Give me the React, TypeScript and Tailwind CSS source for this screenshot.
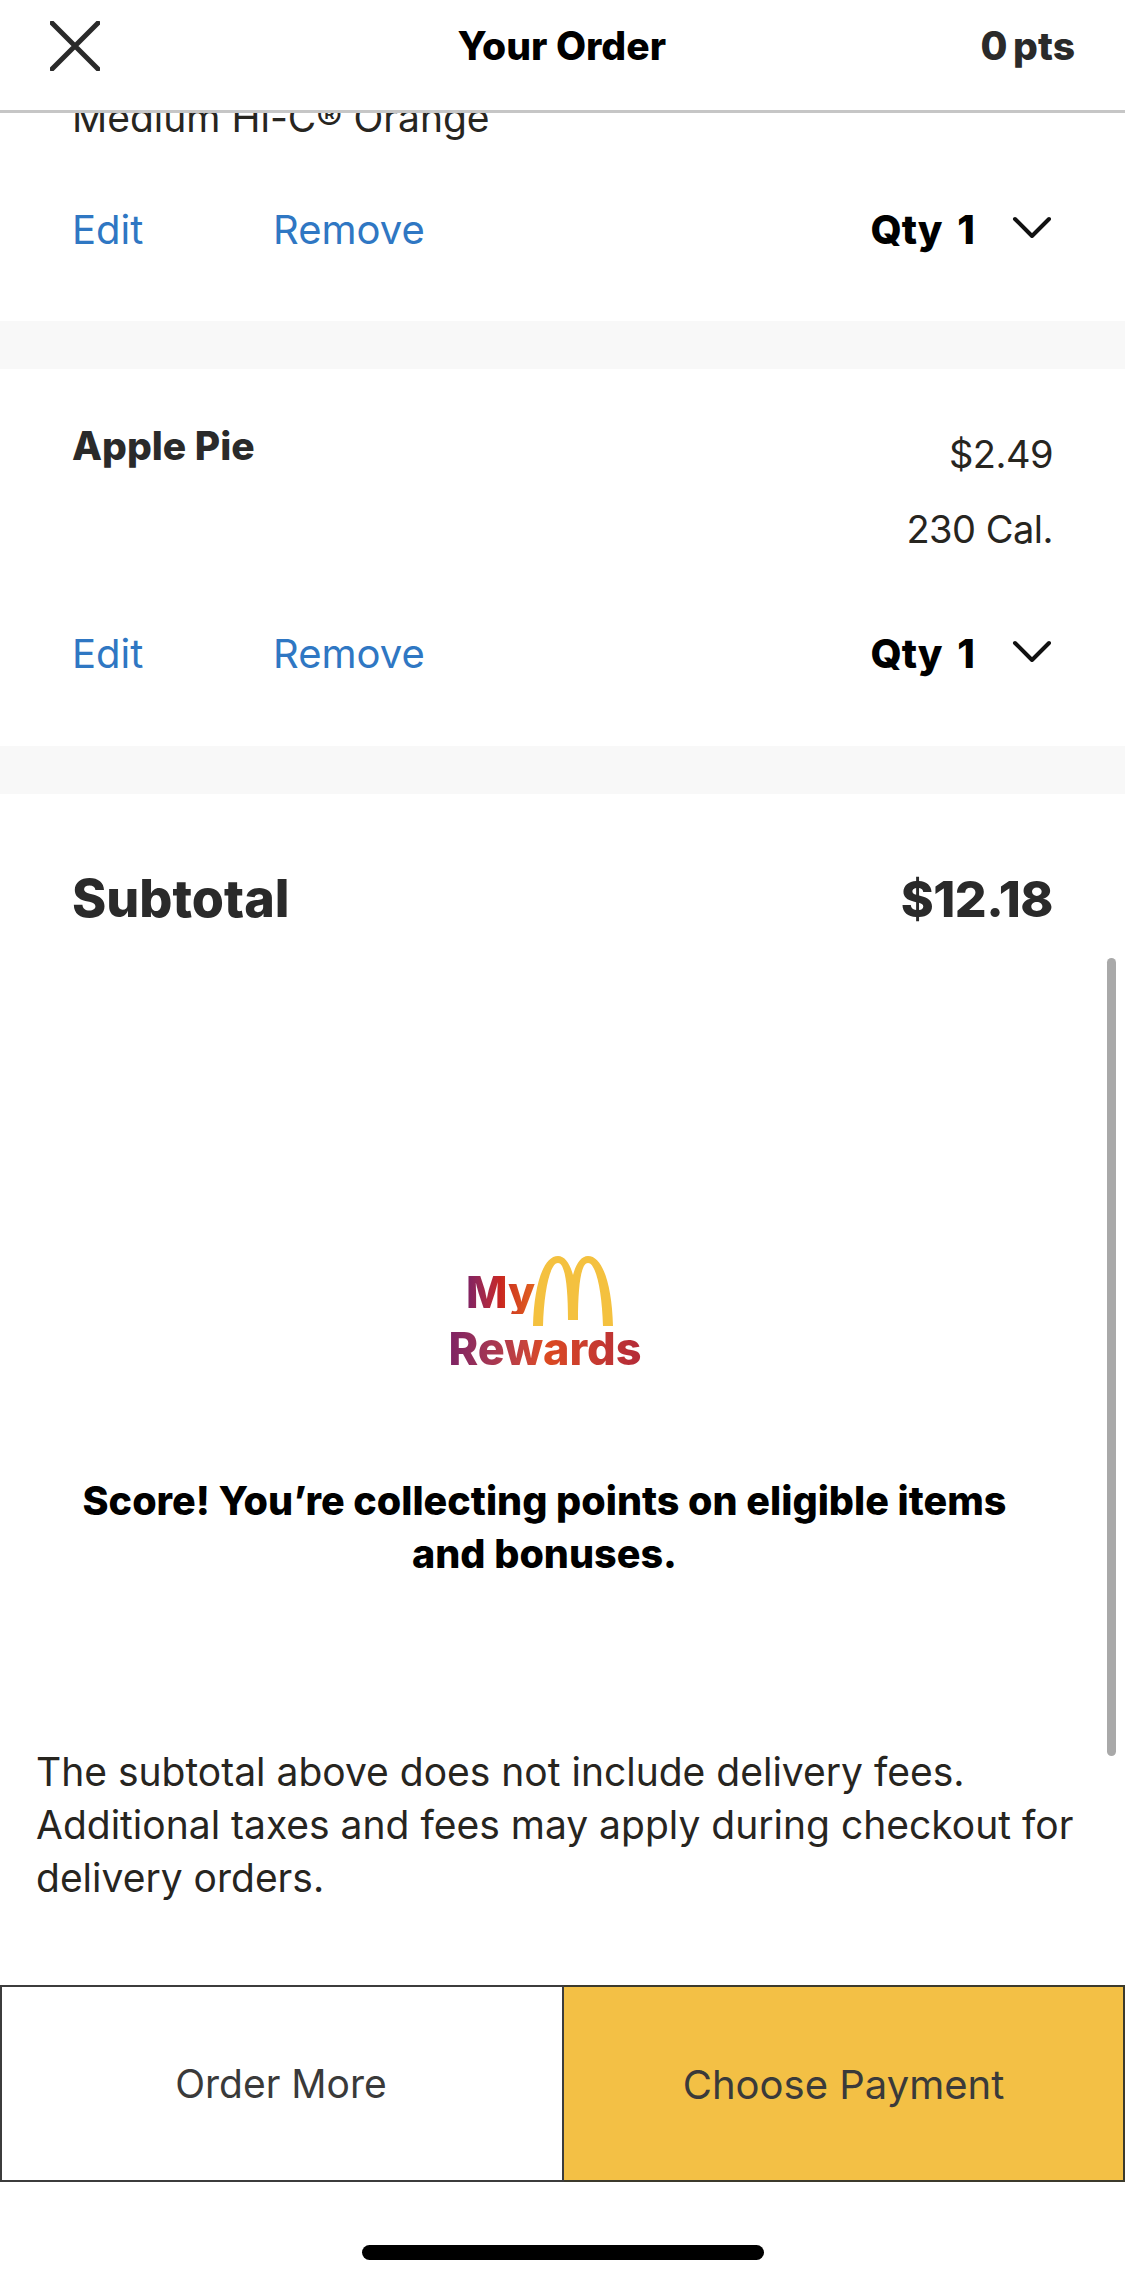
export default function App() {
  const font = { fontFamily: "Inter, 'Noto Sans', sans-serif" };
  const Row = () => (
    <div className="flex items-center h-[53px] text-[40px] leading-[53px]">
      <span className="w-[201px] text-[#2f77c3]">Edit</span>
      <span className="text-[#2f77c3]">Remove</span>
      <span className="ml-auto font-extrabold text-black [word-spacing:6px]">Qty 1</span>
      <svg className="ml-[37px] mr-[1px] mb-[6px]" width="40" height="22" viewBox="0 0 40 22" fill="none" stroke="#111" strokeWidth="4" strokeLinecap="round" strokeLinejoin="round">
        <path d="M3 3 L20 20 L37 3" />
      </svg>
    </div>
  );
  return (
    <div className="relative flex flex-col h-[2284px] w-[1125px] overflow-hidden bg-white text-[#27251f]" style={font}>
      <header className="relative z-10 flex items-center h-[113px] shrink-0 bg-white border-b-[3px] border-[#c6c6c6] pl-[50px] pr-[50px]">
        <svg className="mb-[18px]" width="50" height="50" viewBox="0 0 50 50" fill="none" stroke="#2a2a2a" strokeWidth="5" strokeLinecap="round">
          <path d="M2 2 L48 48 M48 2 L2 48" />
        </svg>
        <h1 className="flex-1 text-center text-[39px] font-extrabold text-black mb-[18px] ml-[43px]">Your Order</h1>
        <span className="text-[39px] font-extrabold text-[#2a2a2a] mb-[18px] [word-spacing:-3px]">0 pts</span>
      </header>

      <section className="h-[208px] shrink-0 pl-[72px] pr-[72px] overflow-hidden">
        <p className="-mt-[22px] text-[39px] leading-[53px]">Medium Hi-C® Orange</p>
        <div className="mt-[59px]"><Row /></div>
      </section>
      <div className="h-[48px] shrink-0 bg-[#f8f8f8]" />

      <section className="h-[377px] shrink-0 px-[72px] pt-[50px]">
        <div className="flex justify-between h-[208px]">
          <p className="text-[39px] leading-[53px] font-extrabold text-[#2a2a2a]">Apple Pie</p>
          <div className="text-right text-[38px] leading-[75px] -mt-[2px] tracking-[-0.5px]">
            <p>$2.49</p>
            <p>230 Cal.</p>
          </div>
        </div>
        <Row />
      </section>
      <div className="h-[48px] shrink-0 bg-[#f8f8f8]" />

      <section className="shrink-0 px-[72px] pt-[70px] flex justify-between items-center h-[140px] font-extrabold text-[#2a2a2a]">
        <span className="text-[52px] leading-[70px]">Subtotal</span>
        <span className="text-[50px] leading-[70px] tracking-[-0.5px]">$12.18</span>
      </section>

      <div className="mt-[321px] flex flex-col items-center shrink-0 ml-[-35px]">
        <div className="flex items-end h-[71px] ml-[-11px] font-extrabold text-[44px] leading-none">
          <span className="bg-gradient-to-r from-[#7d2164] via-[#c9261f] to-[#e2621f] bg-clip-text text-transparent mb-[12px] mr-[-2px]">My</span>
          <svg width="80" height="70" viewBox="0 0 80 70" fill="#f4c13f">
            <path d="M0 70 C1 30 10 0 25 0 C32 0 37 8 40 19 C43 8 48 0 55 0 C70 0 79 30 80 70 L70 70 C69 35 63 7 55 7 C48 7 45 30 45 64 L35 64 C35 30 32 7 25 7 C17 7 11 35 10 70 Z" />
          </svg>
        </div>
        <span className="mt-[2px] font-extrabold text-[45px] leading-[42px] bg-gradient-to-r from-[#7d2164] via-[#dc4a20] to-[#b32a38] bg-clip-text text-transparent">Rewards</span>
      </div>

      <p className="mt-[105px] pl-[40px] pr-[40px] text-center text-[39.5px] leading-[53px] font-extrabold text-black ml-[-36px] whitespace-nowrap">
        Score! You’re collecting points on eligible items<br />and bonuses.
      </p>

      <p className="mt-[164px] px-[36px] text-[39px] leading-[53px] text-[#27251f] whitespace-nowrap">
        The subtotal above does not include delivery fees.<br />
        Additional taxes and fees may apply during checkout for<br />
        delivery orders.
      </p>

      <div className="absolute right-[9px] top-[958px] w-[9px] h-[798px] rounded-full bg-[#a9a9a9]" />

      <div className="mt-auto mb-[102px] flex h-[197px] shrink-0 text-[39px] text-[#3a3a3a]">
        <button className="w-[564px] pt-[2px] pr-[2px] border-2 border-[#3c3c3c] bg-white">Order More</button>
        <button className="flex-1 pt-[2px] border-2 border-l-0 border-[#3c3a2c] bg-[#f3c045] text-[40px]">Choose Payment</button>
      </div>

      <div className="absolute left-[362px] top-[2245px] w-[402px] h-[15px] rounded-full bg-black" />
    </div>
  );
}
